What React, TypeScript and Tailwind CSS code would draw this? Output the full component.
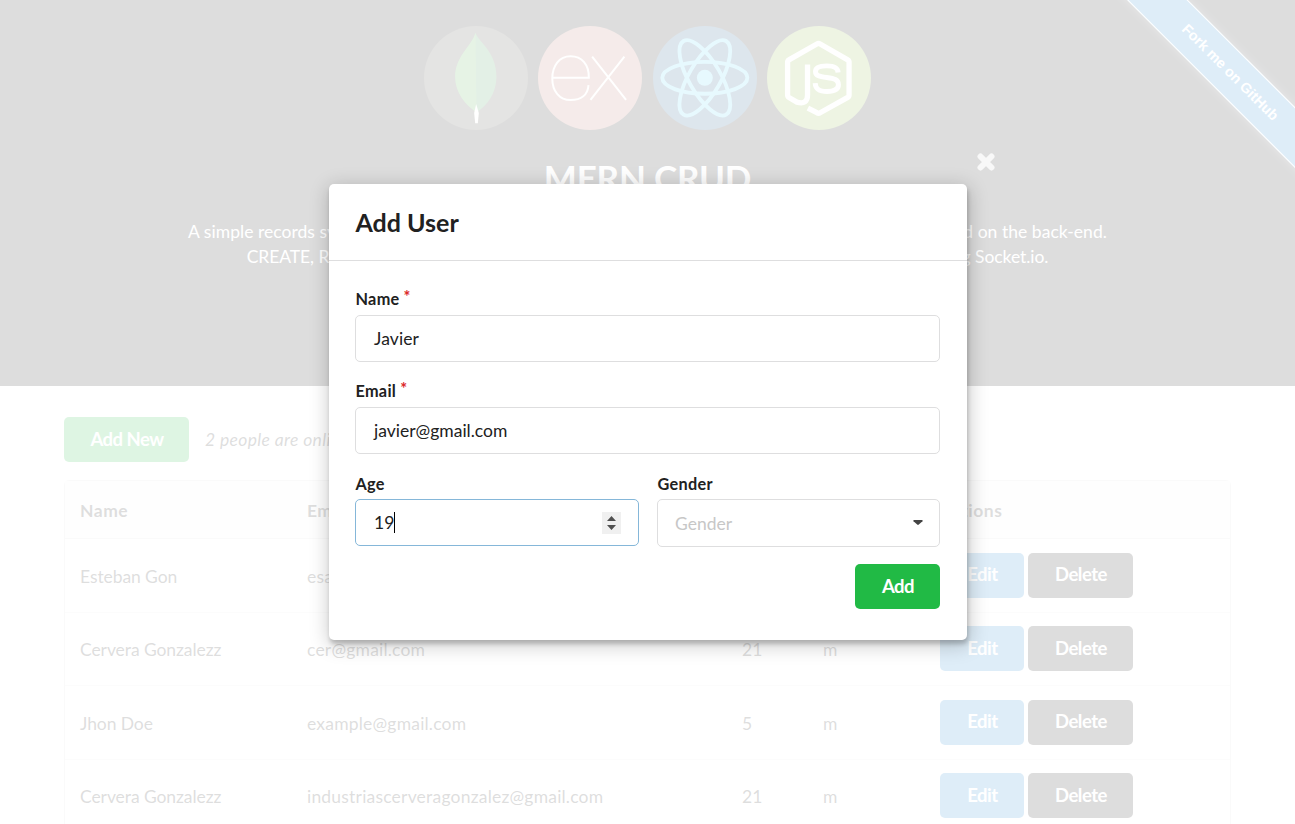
import React from "react";

const people = [
  { name: "Esteban Gon", email: "esa@gmail.com", age: "23", gender: "m" },
  { name: "Cervera Gonzalezz", email: "cer@gmail.com", age: "21", gender: "m" },
  { name: "Jhon Doe", email: "example@gmail.com", age: "5", gender: "m" },
  { name: "Cervera Gonzalezz", email: "industriascerveragonzalez@gmail.com", age: "21", gender: "m" },
];

const columns = "grid grid-cols-[228px_435px_81px_117px_1fr]";

function MongoLogo() {
  return (
    <svg viewBox="0 0 313 313" className="size-[104px]">
      <circle cx="156.500" cy="156.500" r="156.500" fill="#4c4b42" />
      <path d="M155 20C163 48 218 75 218 153C218 202 190 240 158 260C126 238 94 202 94 153C94 90 146 58 155 20Z" fill="#449b58" />
      <path d="M155 20C146 58 94 90 94 153C94 202 126 238 158 260Z" fill="#58b04f" />
      <path d="M157 235L165 262L162 293H154L151 262Z" fill="#fff" />
    </svg>
  );
}

function ExpressLogo() {
  return (
    <svg viewBox="0 0 313 313" className="size-[104px]">
      <circle cx="156.500" cy="156.500" r="156.500" fill="#be7b70" />
      <g fill="none" stroke="#fff" strokeWidth="6">
        <path d="M44 156H153C154 116 132 91 98 91C64 91 43 119 43 158C43 197 65 223 98 223C130 223 150 207 152 178" />
        <path d="M163 92L265 222M260 92L158 222" />
      </g>
    </svg>
  );
}

function ReactLogo() {
  return (
    <svg viewBox="0 0 313 313" className="size-[104px]">
      <circle cx="156.500" cy="156.500" r="156.500" fill="#1f5886" />
      <circle cx="156" cy="156" r="24" fill="#61dafb" />
      <g fill="none" stroke="#61dafb" strokeWidth="11.500">
        <ellipse cx="156" cy="156" rx="128" ry="48" />
        <ellipse cx="156" cy="156" rx="128" ry="48" transform="rotate(60 156 156)" />
        <ellipse cx="156" cy="156" rx="128" ry="48" transform="rotate(120 156 156)" />
      </g>
    </svg>
  );
}

function NodeLogo() {
  return (
    <svg viewBox="0 0 313 313" className="size-[104px]">
      <circle cx="156.500" cy="156.500" r="156.500" fill="#8bb345" />
      <g fill="none" stroke="#fff" strokeLinejoin="round">
        <path strokeWidth="16" d="M122 116V208Q122 238 90 229L66 215Q62 213 62 207V109Q62 104 66 102L150 54Q155 51 160 54L243 102Q247 104 247 109V207Q247 213 243 215L160 261Q155 264 150 261L123 247" />
        <path strokeWidth="15" d="M214 140C213 125 202 120 180 120C157 120 146 126 146 137C146 150 158 152 180 155C202 158 215 161 215 177C215 191 203 197 181 197C156 197 146 189 145 172" />
      </g>
    </svg>
  );
}

function ForkRibbon() {
  return (
    <div className="absolute top-0 right-0 h-[200px] w-[200px] overflow-hidden">
      <div className="absolute top-[51px] left-[-65px] flex h-[43px] w-[400px] rotate-45 items-center justify-center border-y border-white bg-[#2185d0] font-['Liberation_Sans',sans-serif] text-[14.4px] font-bold text-white shadow-[0_0_10px_rgba(255,255,255,0.35)]">
        Fork me on GitHub
      </div>
    </div>
  );
}

function Button({ className, children }: { className: string; children: React.ReactNode }) {
  return (
    <button type="button" className={`h-[45px] rounded-[5px] pb-px pl-px text-center text-[18.5px] font-bold tracking-[-0.5px] text-white ${className}`}>
      {children}
    </button>
  );
}

function Label({ children, required = false }: { children: React.ReactNode; required?: boolean }) {
  return (
    <div className="mb-[5px] flex h-[23px] items-center pl-[0.5px] text-[16.25px] leading-[23px] font-bold tracking-[0.3px]">
      {children}
      {required && <span className="-mt-1 ml-1 text-[#db2828]">*</span>}
    </div>
  );
}

function AddUserModal() {
  return (
    <div className="absolute top-[184px] left-[329px] h-[456px] w-[638px] rounded-[5px] bg-white shadow-[1px_4px_4px_0_rgba(0,0,0,0.2),1px_4px_19px_2px_rgba(0,0,0,0.2)]">
      <svg viewBox="0 0 18 18" className="absolute -top-[31px] left-[648px] size-[18px]" fill="none" stroke="#fff" strokeOpacity="0.8" strokeWidth="6" strokeLinecap="round">
        <path d="M3.500 3.500L14.500 14.500M14.500 3.500L3.500 14.500" />
      </svg>
      <h2 className="flex h-[77px] items-center border-b border-[#dededf] pl-[26.5px] text-[25px] font-bold">Add User</h2>
      <form className="pt-[26px] pr-[27px] pl-[26px]">
        <Label required>Name</Label>
        <div className="mb-4 flex h-[47px] items-center rounded-[5px] border border-[#dededf] px-[18px] tracking-[0.1px]">Javier</div>
        <div className="pt-px">
          <Label required>Email</Label>
          <div className="mb-[18px] flex h-[47px] items-center rounded-[5px] border border-[#dededf] px-[18px]">javier@gmail.com</div>
        </div>
        <div className="grid grid-cols-[284px_283px] gap-[18px]">
          <div>
            <Label>Age</Label>
            <div className="-mt-px flex h-[47px] items-center rounded-[5px] border border-[#85b7d9] pr-[17px] pl-[18px]">
              19
              <span className="h-[21px] w-px bg-black" />
              <span className="ml-auto flex h-[22px] w-[19px] items-center justify-center bg-[#f0f0f0]">
                <svg viewBox="0 0 9 14" className="h-[14px] w-[9px]" fill="#505050">
                  <path d="M4.500 0L9 5H0ZM0 9H9L4.500 14Z" />
                </svg>
              </span>
            </div>
          </div>
          <div>
            <Label>Gender</Label>
            <div className="-mt-px flex h-[48px] items-center justify-between rounded-[5px] border border-[#dededf] pr-4 pl-[17px] text-[#c7c7c7]">
              Gender
              <svg viewBox="0 0 10 5" className="-mt-0.5 h-[5px] w-[10px]" fill="#444">
                <path d="M1 0H9Q10 .5 9.500 1.200L5.800 4.600Q5 5.200 4.200 4.600L.5 1.200Q0 .5 1 0Z" />
              </svg>
            </div>
          </div>
        </div>
        <div className="mt-[17px] flex justify-end">
          <Button className="w-[85px] bg-[#21ba45]">Add</Button>
        </div>
      </form>
    </div>
  );
}

export default function App() {
  return (
    <div className="relative h-[824px] w-[1295px] overflow-hidden bg-white font-['Lato',sans-serif] text-[17.5px] leading-[25px] text-[#212121]">
      <header className="flex h-[386px] flex-col items-center bg-[#1b1c1d] pt-[26px] text-center text-white">
        <div className="flex gap-[10.3px]">
          <MongoLogo />
          <ExpressLogo />
          <ReactLogo />
          <NodeLogo />
        </div>
        <h1 className="mt-[24px] text-[35px] leading-[46px] font-bold tracking-[-0.2px]">MERN CRUD</h1>
        <p className="mt-[19px] whitespace-nowrap tracking-[0.035px]">
          A simple records system using MongoDB, Express.js, React.js, and Node.js. REST API was implemented on the back-end.
        </p>
        <p className="whitespace-nowrap tracking-[-0.065px]">
          CREATE, READ, UPDATE and DELETE operations are updated in real-time to online users using Socket.io.
        </p>
      </header>
      <main className="px-16 pt-[31px]">
        <div className="flex items-center gap-4">
          <Button className="w-[125px] bg-[#21ba45]">Add New</Button>
          <em className="tracking-[0.35px]">2 people are online.</em>
        </div>
        <div className="mt-[18px] w-[1167px] rounded-t-[5px] border border-[#dededf]">
          <div className={`${columns} h-[58px] items-center border-b border-[#dededf] bg-[#f9fafb] pt-0.5 font-bold tracking-[0.5px]`}>
            <span className="pl-[15px]">Name</span>
            <span className="pl-[14px]">Email</span>
            <span className="pl-[14px]">Age</span>
            <span className="pl-[14px]">Gender</span>
            <span className="pl-[14px]">Actions</span>
          </div>
          {people.map((person, index) => (
            <div key={index} className={`${columns} h-[73.5px] items-center border-b border-[#e8e8e9]`}>
              <span className="pt-0.5 pl-[15px] tracking-[-0.08px]">{person.name}</span>
              <span className="pt-0.5 pl-[14px] tracking-[0.2px]">{person.email}</span>
              <span className="pt-0.5 pl-[14px]">{person.age}</span>
              <span className="pt-0.5 pl-[14px]">{person.gender}</span>
              <span className="flex gap-1 pl-[14px]">
                <Button className="w-[84px] bg-[#2185d0]">Edit</Button>
                <Button className="w-[105px] bg-[#1b1c1d]">Delete</Button>
              </span>
            </div>
          ))}
        </div>
      </main>
      <ForkRibbon />
      <div className="absolute inset-0 bg-white/85" />
      <AddUserModal />
    </div>
  );
}
